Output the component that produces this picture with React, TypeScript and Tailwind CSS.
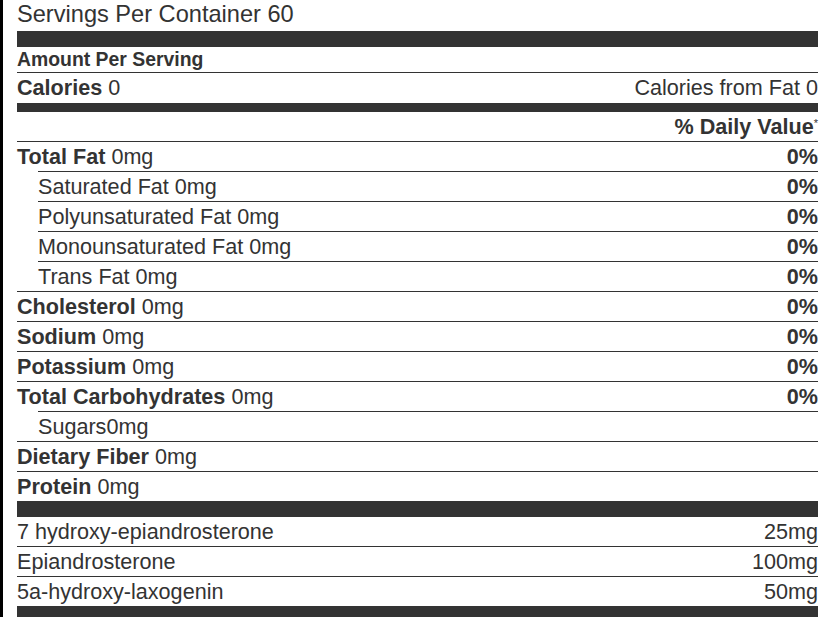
const nutrients = [
  { name: "Total Fat", amount: "0mg", dv: "0%", bold: true },
  { name: "Saturated Fat", amount: "0mg", dv: "0%", sub: true },
  { name: "Polyunsaturated Fat", amount: "0mg", dv: "0%", sub: true },
  { name: "Monounsaturated Fat", amount: "0mg", dv: "0%", sub: true },
  { name: "Trans Fat", amount: "0mg", dv: "0%", sub: true },
  { name: "Cholesterol", amount: "0mg", dv: "0%", bold: true },
  { name: "Sodium", amount: "0mg", dv: "0%", bold: true },
  { name: "Potassium", amount: "0mg", dv: "0%", bold: true },
  { name: "Total Carbohydrates", amount: "0mg", dv: "0%", bold: true },
  { name: "Sugars", amount: "0mg", dv: "", sub: true, tight: true },
  { name: "Dietary Fiber", amount: "0mg", dv: "", bold: true },
  { name: "Protein", amount: "0mg", dv: "", bold: true },
]

const ingredients = [
  { name: "7 hydroxy-epiandrosterone", amount: "25mg" },
  { name: "Epiandrosterone", amount: "100mg" },
  { name: "5a-hydroxy-laxogenin", amount: "50mg" },
]

export default function App() {
  return (
    <div
      className="min-h-[617px] w-[829px] overflow-hidden bg-white border-l-[3px] border-black pl-[14px] pr-[11px] text-[#333]"
      style={{ fontFamily: '"Liberation Sans", Arial, sans-serif' }}
    >
      <div className="text-[23.6px] leading-[28px] mb-[3px] whitespace-nowrap">Servings Per Container 60</div>
      <div className="h-[16px] bg-[#333]" />

      <div className="text-[19.4px] leading-[25px] font-bold border-b border-[#333]">Amount Per Serving</div>
      <div className="flex justify-between text-[21.6px] leading-[30px]">
        <div>
          <span className="font-bold">Calories</span> 0
        </div>
        <div>Calories from Fat 0</div>
      </div>
      <div className="h-[9px] bg-[#333]" />

      <div className="text-right text-[21.6px] leading-[29px] font-bold">
        % Daily Value<sup className="text-[11px] font-normal relative -top-[7px]">*</sup>
      </div>

      {nutrients.map((n) => (
        <div
          key={n.name}
          className={`flex justify-between border-t border-[#333] text-[21.6px] leading-[29px] ${n.sub ? "ml-[21px]" : ""}`}
        >
          <div className="whitespace-nowrap">
            {n.bold ? <span className="font-bold">{n.name}</span> : n.name}
            {n.tight ? "" : " "}
            {n.amount}
          </div>
          <div className="font-bold">{n.dv}</div>
        </div>
      ))}

      <div className="h-[16px] bg-[#333]" />

      {ingredients.map((item, i) => (
        <div
          key={item.name}
          className={`flex justify-between text-[21.6px] leading-[29px] ${i > 0 ? "border-t border-[#333]" : ""}`}
        >
          <div>{item.name}</div>
          <div>{item.amount}</div>
        </div>
      ))}
      <div className="h-[16px] bg-[#333]" />
    </div>
  )
}
